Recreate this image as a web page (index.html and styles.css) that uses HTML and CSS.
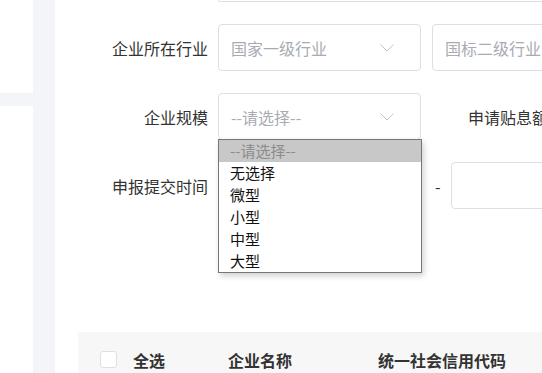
FILE: index.html
```html
<!DOCTYPE html>
<html lang="zh-CN">
<head>
	<meta charset="UTF-8">
	<title>企业查询</title>
	<link rel="stylesheet" href="styles.css">
</head>
<body>
<div class="page">
	<div class="side">
		<div class="side-band"></div>
	</div>
	<div class="gutter"></div>
	<div class="main">
		<div class="prev-row"><div class="prev-input"></div></div>

		<div class="row">
			<label class="label">企业所在行业</label>
			<div class="select">
				<span class="ph">国家一级行业</span>
				<svg class="arrow" width="14" height="8" viewBox="0 0 14 8"><path d="M0.5 0.5 L7 7 L13.5 0.5" fill="none" stroke="#c0c4cc" stroke-width="1"/></svg>
			</div>
			<div class="select">
				<span class="ph">国标二级行业</span>
			</div>
		</div>

		<div class="row">
			<label class="label">企业规模</label>
			<div class="select">
				<span class="ph">--请选择--</span>
				<svg class="arrow" width="14" height="8" viewBox="0 0 14 8"><path d="M0.5 0.5 L7 7 L13.5 0.5" fill="none" stroke="#c0c4cc" stroke-width="1"/></svg>
				<ul class="popup">
					<li class="on">--请选择--</li>
					<li>无选择</li>
					<li>微型</li>
					<li>小型</li>
					<li>中型</li>
					<li>大型</li>
				</ul>
			</div>
			<label class="label2">申请贴息额度</label>
		</div>

		<div class="row">
			<label class="label">申报提交时间</label>
			<div class="select"></div>
			<span class="dash">-</span>
			<div class="select"></div>
		</div>

		<div class="thead">
			<span class="check"></span>
			<span class="th th-all">全选</span>
			<span class="th th-name">企业名称</span>
			<span class="th">统一社会信用代码</span>
		</div>
	</div>
</div>
</body>
</html>
```

FILE: styles.css
```css
*{padding:0; margin:0; box-sizing:border-box;}
html,body{width:542px; height:373px; overflow:hidden; background:#fff;}
body{font-family:"Noto Sans CJK SC","Microsoft YaHei",sans-serif; font-size:16px; color:#333;}

.page{display:flex; height:373px;}
.side{width:33px; flex:none; padding-top:93px;}
.side-band{height:13px; background:#f4f5f9;}
.gutter{width:22px; flex:none; background:#f4f5f9;}
.main{flex:1; min-width:0; overflow:hidden;}

.prev-row{height:24px; padding-left:163px;}
.prev-input{width:400px; height:2px; border:1px solid #dcdfe6; border-top:none; border-radius:0 0 4px 4px;}

.row{display:flex; align-items:center; height:47px; margin-bottom:22px; white-space:nowrap;}
.label{width:153px; flex:none; text-align:right; margin-right:10px;}
.select{position:relative; flex:none; width:203px; height:47px; margin-right:11px; border:1px solid #dcdfe6; border-radius:4px; display:flex; align-items:center; padding-left:12px;}
.ph{color:#a8abb2;}
.arrow{position:absolute; left:161px; top:19px;}
.label2{margin-left:36px; flex:none;}
.dash{width:19px; flex:none; padding-left:3px; color:#333;}

.popup{position:absolute; left:-1px; top:45px; width:204px; list-style:none; background:#fff; border:1px solid #767676; box-shadow:2px 3px 6px rgba(0,0,0,0.18); z-index:5; font-size:15px;}
.popup li{height:22px; line-height:22px; padding-left:11px; color:#111;}
.popup li.on{background:#c8c8c8; color:#8c8c8c;}

.thead{margin:123px 0 0 23px; height:60px; background:#f7f7f7; display:flex; align-items:flex-start; padding:19px 0 0 22px; white-space:nowrap;}
.check{width:17px; height:17px; flex:none; border:1px solid #dcdfe6; border-radius:3px; background:#fff; margin-top:0;}
.th{font-weight:bold; color:#333; line-height:18px;}
.th-all{margin-left:16px; width:95px;}
.th-name{width:150px;}
```
